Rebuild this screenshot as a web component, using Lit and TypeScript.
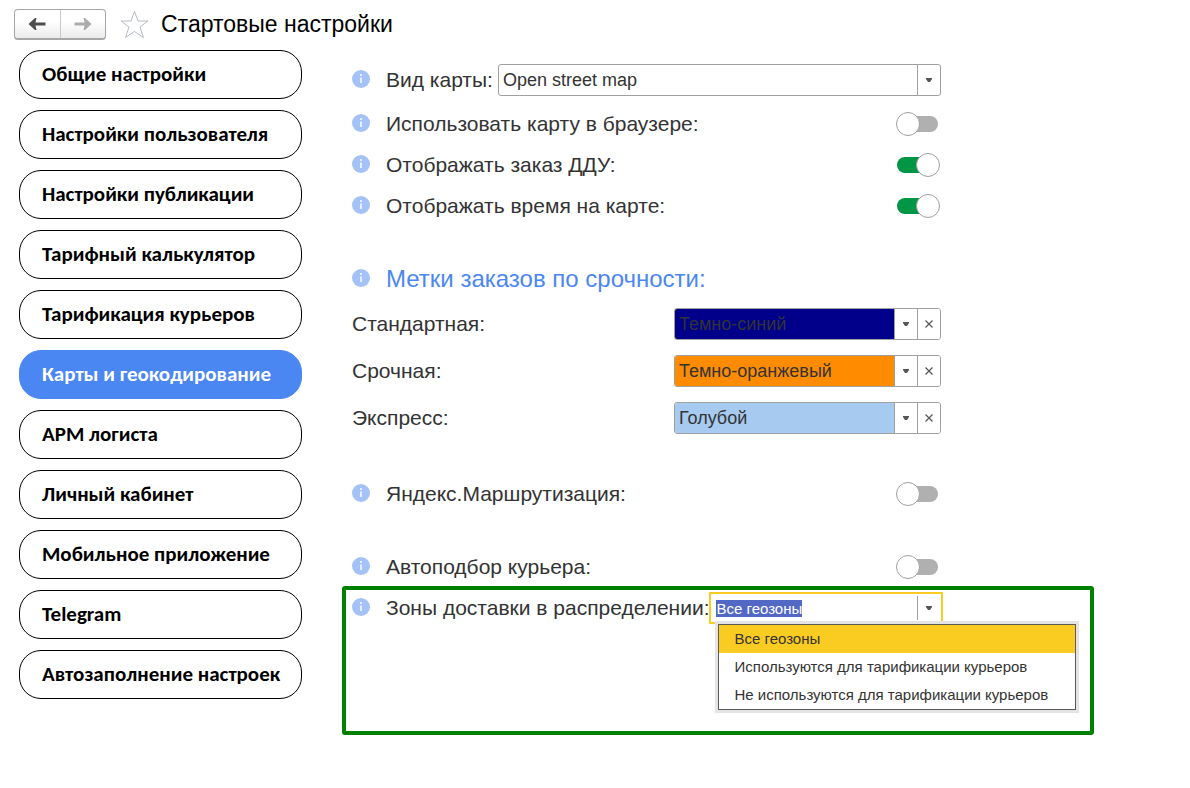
import { LitElement, html, css, svg } from "lit";
import { customElement, property, query, state } from "lit/decorators.js";
import { classMap } from "lit/directives/class-map.js";
import { styleMap } from "lit/directives/style-map.js";

const MENU = [
  "Общие настройки",
  "Настройки пользователя",
  "Настройки публикации",
  "Тарифный калькулятор",
  "Тарификация курьеров",
  "Карты и геокодирование",
  "АРМ логиста",
  "Личный кабинет",
  "Мобильное приложение",
  "Telegram",
  "Автозаполнение настроек",
];

const MARKS = [
  { id: "standard", label: "Стандартная:", value: "Темно-синий", color: "#00008b" },
  { id: "urgent", label: "Срочная:", value: "Темно-оранжевый", color: "#ff8c00" },
  { id: "express", label: "Экспресс:", value: "Голубой", color: "#a6caf0" },
];

const ZONES = [
  "Все геозоны",
  "Используются для тарификации курьеров",
  "Не используются для тарификации курьеров",
];

const caret = svg`<path d="M0 0H6V1L4 4H2L0 1z" fill="#555"/>`;

@customElement("info-button")
class InfoButton extends LitElement {
  static styles = css`
    :host {
      display: block;
      width: 34px;
      flex: none;
    }
    .info {
      display: block;
      width: 18px;
      height: 18px;
      margin: 0 0 2px;
      padding: 0;
      border: 0;
      border-radius: 50%;
      background: #a4c2f7;
    }
    .glyph {
      display: block;
    }
  `;

  render() {
    return html`<button class="info" type="button" aria-label="Подсказка">
      <svg class="glyph" width="18" height="18" viewBox="0 0 18 18" aria-hidden="true">
        <path d="M8 4h2v2H8zM8 7.5h2V13H8z" fill="#e6effd" />
      </svg>
    </button>`;
  }
}

@customElement("setting-switch")
class SettingSwitch extends LitElement {
  @property() label = "";
  @property({ type: Boolean }) on = false;

  static styles = css`
    :host {
      display: flex;
      align-items: center;
      height: 24px;
      padding-bottom: 1px;
    }
    .label {
      flex: 1;
      font-size: 21px;
      line-height: 24px;
    }
    .switch {
      appearance: none;
      display: grid;
      align-items: center;
      width: 44px;
      height: 24px;
      margin: 0 1px 0 0;
    }
    .switch::before,
    .switch::after {
      content: "";
      grid-area: 1 / 1;
      box-sizing: border-box;
    }
    .switch::before {
      height: 16px;
      margin: 0 2px 0 1px;
      border-radius: 8px;
      background: #b0b0b0;
    }
    .switch::after {
      width: 24px;
      height: 24px;
      border: 1px solid #a0a0a0;
      border-radius: 50%;
      background: #fff;
    }
    .switch:checked::before {
      background: #009646;
    }
    .switch:checked::after {
      justify-self: end;
    }
  `;

  render() {
    return html`
      <info-button></info-button>
      <label class="label" for="switch">${this.label}</label>
      <input class="switch" id="switch" type="checkbox" .checked=${this.on} />
    `;
  }
}

@customElement("app-root")
class AppRoot extends LitElement {
  @state() private current = "Карты и геокодирование";
  @query("#zones") private zones!: HTMLInputElement;

  static styles = css`
    :host {
      display: block;
      min-height: 100vh;
      background: #fff;
      color: #333;
      font-family: "Liberation Sans", Arial, sans-serif;
    }
    button,
    input,
    select {
      font-family: inherit;
      color: inherit;
    }
    .header {
      display: flex;
      align-items: center;
      height: 32px;
      padding: 8px 14px 10px;
    }
    .history {
      display: flex;
      box-sizing: border-box;
      width: 92px;
      height: 31px;
      border: 1px solid #a6a6a6;
      border-bottom: 2px solid #a6a6a6;
      border-radius: 4px;
      background: linear-gradient(#fff, #fff 40%, #ebebeb);
    }
    .step {
      display: grid;
      place-items: center;
      flex: 1;
      padding: 0;
      border: 0;
      background: none;
    }
    .step + .step {
      border-left: 1px solid #c8c8c8;
    }
    .favorite {
      display: block;
      margin: 0 12px 0 14px;
      padding: 0;
      border: 0;
      background: none;
    }
    .icon {
      display: block;
    }
    .title {
      margin: 0;
      color: #000;
      font-size: 23px;
      font-weight: 400;
      line-height: 32px;
    }
    .page {
      display: grid;
      grid-template-columns: 283px minmax(0, 1fr);
      gap: 40px;
      padding: 0 96px 0 19px;
    }
    .menu {
      display: flex;
      flex-direction: column;
      gap: 11px;
    }
    .item {
      box-sizing: border-box;
      height: 49px;
      padding: 0 0 2px 22px;
      border: 1px solid #000;
      border-radius: 22px;
      background: #fff;
      color: #000;
      font-family: Carlito, Calibri, "Noto Sans", sans-serif;
      font-size: 21px;
      font-weight: 700;
      text-align: left;
      white-space: nowrap;
    }
    .item.active {
      border-color: #4b87f2;
      background: #4b87f2;
      color: #fff;
    }
    .group {
      display: grid;
      gap: 16px;
      max-width: 589px;
      margin: 0 10px 48px;
    }
    .general {
      margin-top: 14px;
      margin-bottom: 46px;
    }
    .marks {
      gap: 15px;
    }
    .last {
      margin-bottom: 6px;
    }
    .row {
      display: flex;
      align-items: center;
    }
    .heading {
      margin: 0;
      color: #4b87f2;
      font-size: 24px;
      font-weight: 400;
      line-height: 28px;
    }
    .label {
      font-size: 21px;
      line-height: 32px;
      white-space: nowrap;
    }
    .wide {
      flex: 1;
    }
    .field {
      display: grid;
      grid-template-columns: minmax(0, 1fr) 23px;
      box-sizing: border-box;
      height: 32px;
      border: 1px solid #a0a0a0;
      border-radius: 3px;
      overflow: hidden;
    }
    .kind {
      flex: 1;
      margin-left: 5px;
    }
    .mark {
      grid-template-columns: minmax(0, 1fr) 23px 23px;
      width: 267px;
    }
    .select {
      grid-row: 1;
      grid-column: 1 / 3;
      appearance: none;
      min-width: 0;
      margin: 0;
      padding: 0 4px;
      border: 0;
      outline: 0;
      background: none;
      font-size: 18px;
    }
    .fill {
      grid-row: 1;
      grid-column: 1;
    }
    .arrow {
      grid-row: 1;
      grid-column: 2;
      display: grid;
      place-items: center;
      border-left: 1px solid #a0a0a0;
      pointer-events: none;
    }
    .clear {
      display: grid;
      place-items: center;
      padding: 0;
      border: 0;
      border-left: 1px solid #a0a0a0;
      background: #fff;
    }
    .callout {
      box-sizing: border-box;
      min-height: 149px;
      padding: 2px 6px;
      border: 4px solid #008000;
      border-radius: 3px;
    }
    .callout .row {
      max-width: 589px;
    }
    .zone {
      position: relative;
      grid-template-columns: minmax(0, 1fr) 24px;
      flex: 1;
      margin-right: -2px;
      border: 2px solid #facb20;
      border-radius: 0;
      overflow: visible;
    }
    .entry {
      min-width: 0;
      padding: 0 5px;
      border: 0;
      outline: 0;
      background: none;
      font-size: 15px;
    }
    .entry::selection {
      background: #5169c4;
      color: #fff;
    }
    .open {
      display: grid;
      place-items: center;
      margin: 2px 0;
      padding: 0 1px 0 0;
      border: 0;
      border-left: 1px solid #a0a0a0;
      background: none;
    }
    .popup {
      position: absolute;
      top: 30px;
      left: 7px;
      margin: 0;
      padding: 0;
      border: 1px solid #5a5a5a;
      box-shadow: 0 0 0 3px #e4e4e4;
      background: #fff;
      list-style: none;
    }
    .option {
      padding: 0 27px 0 15px;
      font-size: 15px;
      line-height: 28px;
      white-space: nowrap;
    }
    .option.chosen {
      background: #facb20;
    }
  `;

  firstUpdated() {
    this.zones.focus();
    this.zones.select();
  }

  private arrow() {
    return html`<svg class="icon" width="6" height="4" viewBox="0 0 6 4" aria-hidden="true">${caret}</svg>`;
  }

  render() {
    return html`
      <header class="header">
        <div class="history">
          <button class="step" type="button" aria-label="Назад">
            <svg class="icon" width="18" height="14" viewBox="0 0 18 14">
              <path d="M0.5 7 7 1H8.5L7.5 5.5H17.5V8.5H7.5L8.5 13H7Z" fill="#4d4d4d" />
            </svg>
          </button>
          <button class="step" type="button" aria-label="Вперед">
            <svg class="icon" width="18" height="14" viewBox="0 0 18 14">
              <path d="M17.5 7 11 1H9.5L10.5 5.5H0.5V8.5H10.5L9.5 13H11Z" fill="#ababab" />
            </svg>
          </button>
        </div>
        <button class="favorite" type="button" aria-label="В избранное">
          <svg class="icon" width="29" height="29" viewBox="0 0 29 29">
            <path
              d="M14.5 1.5 18 11H28L20 17 23.5 27.5 14.5 21.5 5.5 27.5 9 17 1 11H11Z"
              fill="#fff"
              stroke="#b4bcc4"
            />
          </svg>
        </button>
        <h1 class="title">Стартовые настройки</h1>
      </header>
      <div class="page">
        <nav class="menu">
          ${MENU.map(
            (name) => html`<button
              class=${classMap({ item: true, active: name === this.current })}
              type="button"
              @click=${() => (this.current = name)}
            >
              ${name}
            </button>`
          )}
        </nav>
        <main>
          <section class="group general">
            <div class="row">
              <info-button></info-button>
              <label class="label" for="kind">Вид карты:</label>
              <div class="field kind">
                <select class="select" id="kind">
                  <option>Open street map</option>
                </select>
                <span class="arrow">${this.arrow()}</span>
              </div>
            </div>
            <setting-switch label="Использовать карту в браузере:"></setting-switch>
            <setting-switch label="Отображать заказ ДДУ:" on></setting-switch>
            <setting-switch label="Отображать время на карте:" on></setting-switch>
          </section>
          <section class="group marks">
            <div class="row">
              <info-button></info-button>
              <h2 class="heading">Метки заказов по срочности:</h2>
            </div>
            ${MARKS.map(
              (mark) => html`<div class="row">
                <label class="label wide" for=${mark.id}>${mark.label}</label>
                <div class="field mark">
                  <span class="fill" style=${styleMap({ background: mark.color })}></span>
                  <select class="select" id=${mark.id}>
                    <option>${mark.value}</option>
                  </select>
                  <span class="arrow">${this.arrow()}</span>
                  <button class="clear" type="button" aria-label="Очистить">
                    <svg class="icon" width="8" height="8" viewBox="0 0 8 8">
                      <path d="M0.5 0.5l7 7M7.5 0.5l-7 7" stroke="#555" stroke-width="1.2" />
                    </svg>
                  </button>
                </div>
              </div>`
            )}
          </section>
          <section class="group">
            <setting-switch label="Яндекс.Маршрутизация:"></setting-switch>
          </section>
          <section class="group last">
            <setting-switch label="Автоподбор курьера:"></setting-switch>
          </section>
          <section class="callout">
            <div class="row">
              <info-button></info-button>
              <label class="label" for="zones">Зоны доставки в распределении:</label>
              <div class="field zone">
                <input class="entry" id="zones" type="text" .value=${ZONES[0]} autocomplete="off" />
                <button class="open" type="button" aria-label="Открыть список">${this.arrow()}</button>
                <ul class="popup" role="listbox">
                  ${ZONES.map(
                    (zone, i) => html`<li
                      class=${classMap({ option: true, chosen: i === 0 })}
                      role="option"
                      aria-selected=${i === 0}
                    >
                      ${zone}
                    </li>`
                  )}
                </ul>
              </div>
            </div>
          </section>
        </main>
      </div>
    `;
  }
}
